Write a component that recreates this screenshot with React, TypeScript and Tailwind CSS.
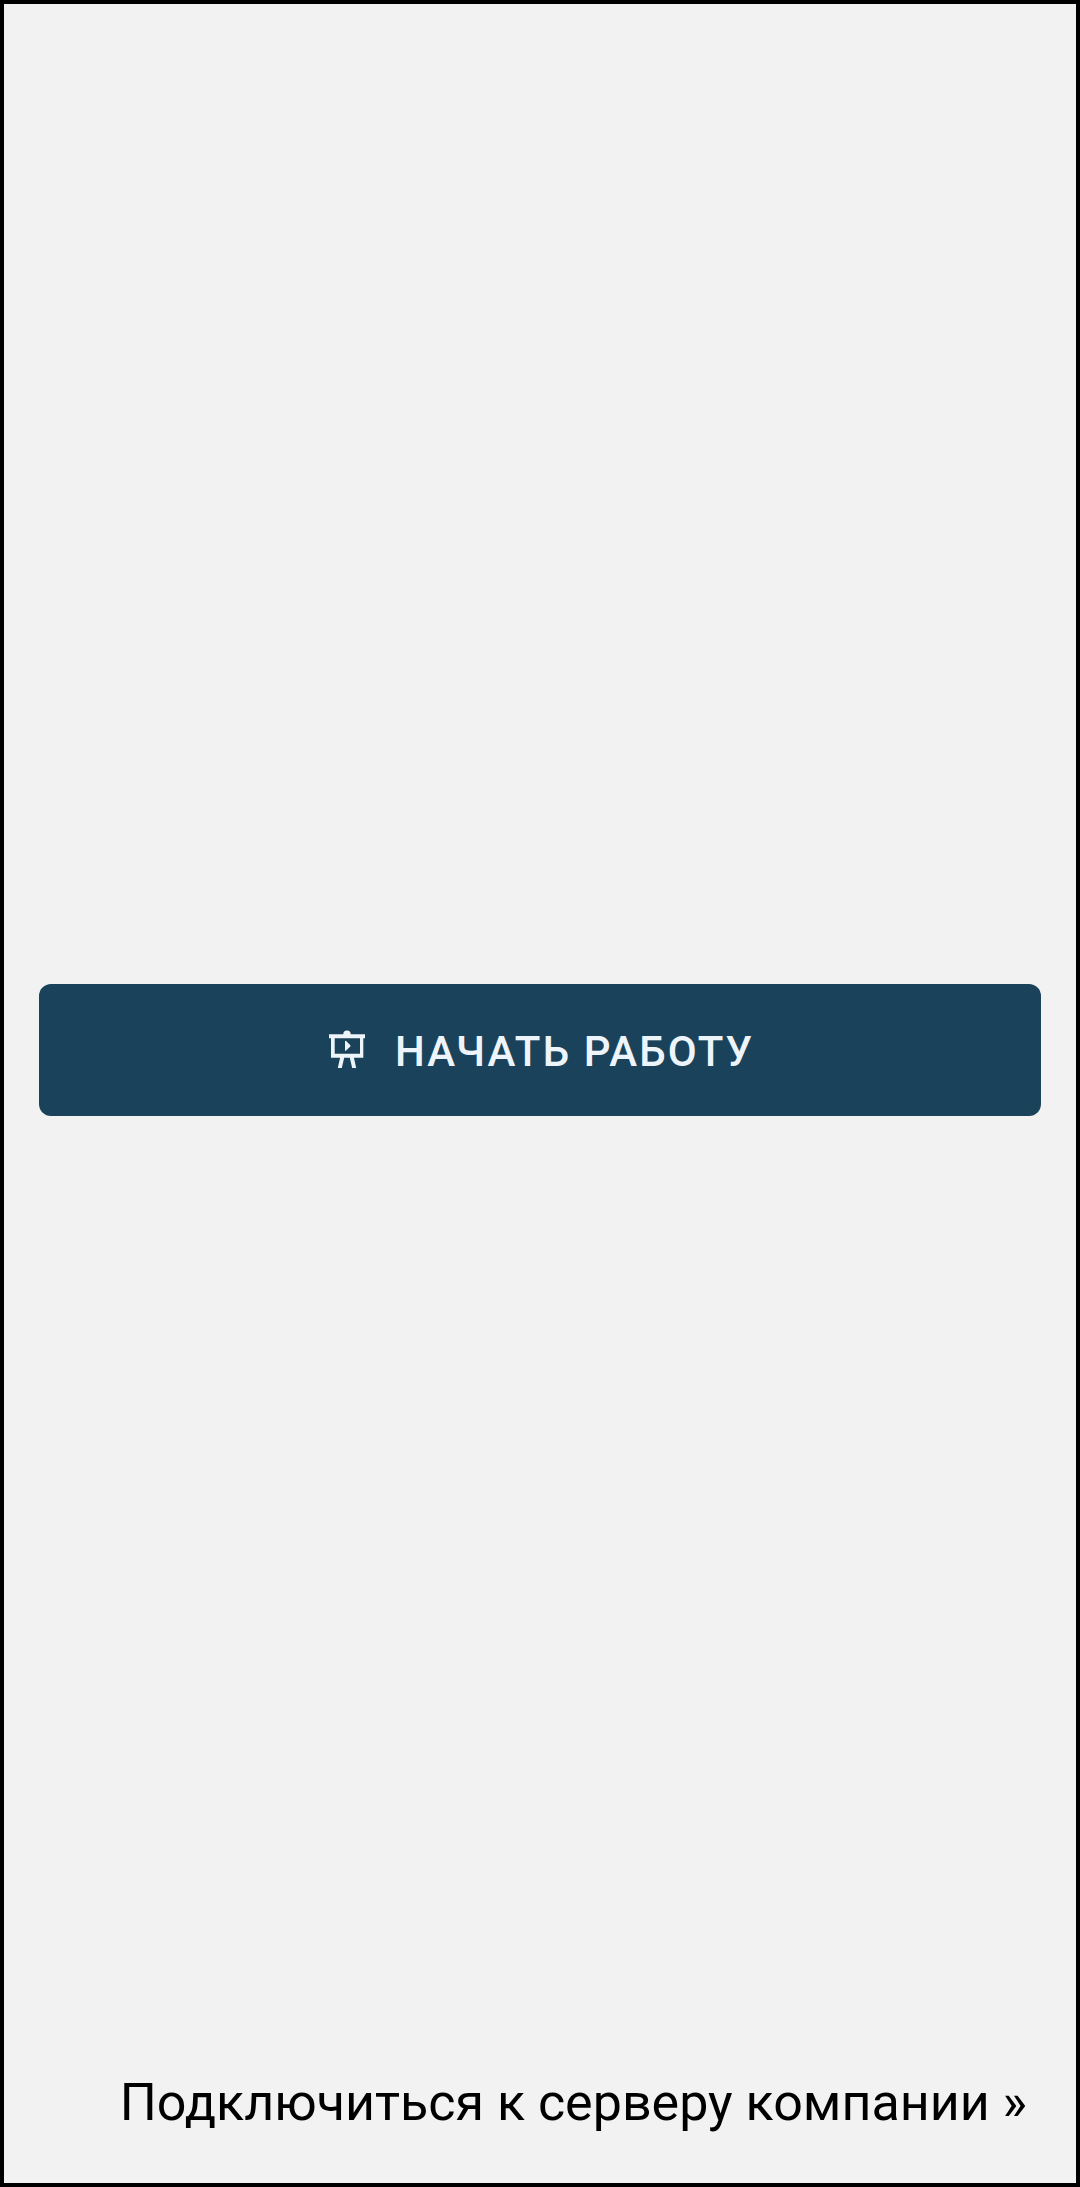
export default function App() {
  return (
    <main className="flex h-[2187px] w-[1080px] flex-col border-4 border-black bg-[#f2f2f2] px-[35px] font-['Roboto',sans-serif]">
      <div className="h-[980px] shrink-0" />
      <button className="flex h-[132px] shrink-0 items-center gap-[30px] rounded-xl bg-[#1a435b] pl-[290px] text-[#eef5fa]">
        <svg className="mb-[2px] h-[38px] w-9 shrink-0" viewBox="0 0 36 38" fill="currentColor">
          <path d="M14.3 4.2a3.7 3.7 0 0 1 7.4 0H36v4h-1.7v19.5h-9.4L27.2 38h-4L20.8 27.7h-5.6L12.8 38h-4l2.3-10.3H2V8.2H0v-4ZM5.7 8.2v15.5h25.3V8.2Z" />
          <path d="M16 11.6q0-1.4 1.1-.5l4 3.9q.9.9 0 1.8l-4 3.8q-1.1.9-1.1-.5Z" />
        </svg>
        <span className="pt-1 text-[42px] font-medium leading-none tracking-[2.07px]">НАЧАТЬ РАБОТУ</span>
      </button>
      <a className="mt-auto mb-[49px] mr-[14px] self-end whitespace-nowrap text-[52px] leading-[62px] text-black">Подключиться к серверу компании »</a>
    </main>
  );
}
